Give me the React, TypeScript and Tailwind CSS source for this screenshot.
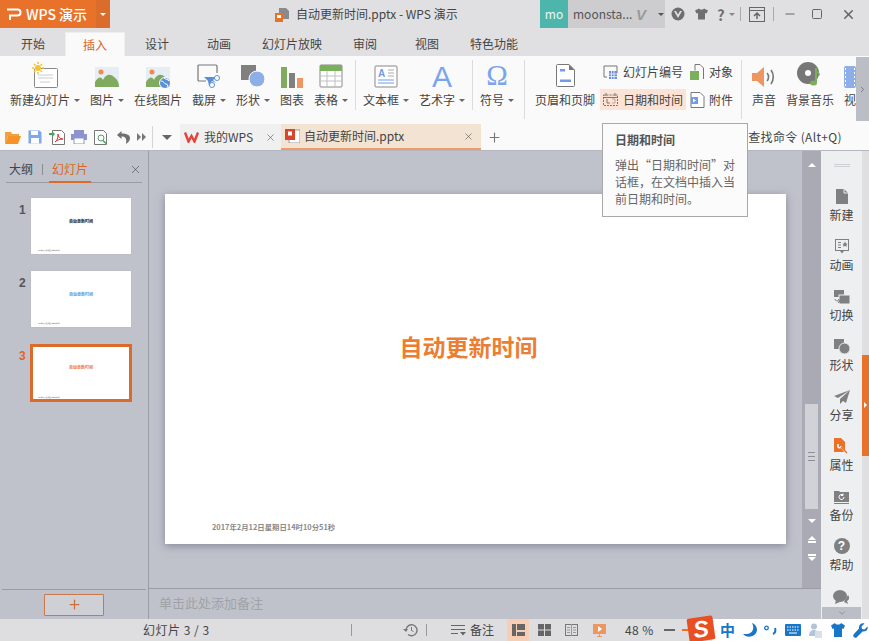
import type { ReactNode } from "react";
import { ChevronDown, ChevronRight, Minus, Plus, Square, X } from "lucide-react";

const font = "font-['Noto_Sans_CJK_SC','Liberation_Sans',sans-serif]";

const tabs = [
  { label: "开始", w: "w-[62px]" },
  { label: "插入", w: "mx-px w-[60px]", active: true },
  { label: "设计", w: "w-[62px]" },
  { label: "动画", w: "w-[62px]" },
  { label: "幻灯片放映", w: "w-[84px]" },
  { label: "审阅", w: "w-[62px]" },
  { label: "视图", w: "w-[62px]" },
  { label: "特色功能", w: "w-[72px]" },
];

function Caret() {
  return <span className="ml-[4px] inline-block h-0 w-0 border-x-[3px] border-t-[3px] border-x-transparent border-t-[#666]" />;
}

function Sep({ tall }: { tall?: boolean }) {
  return <div className={`mt-[4px] w-px shrink-0 bg-[#dcdcdc] ${tall ? "h-[59px]" : "h-[50px]"}`} />;
}

function RibbonBtn({ w, label, caret, icon }: { w: string; label: string; caret?: boolean; icon: ReactNode }) {
  return (
    <div className={`${w} flex shrink-0 flex-col items-center`}>
      <div className="flex h-[32px] items-end justify-center">{icon}</div>
      <div className="mt-[2px] flex h-[20px] items-center whitespace-nowrap text-[12px] text-[#444]">
        {label}
        {caret && <Caret />}
      </div>
    </div>
  );
}

function NewSlideIcon() {
  return (
    <svg width="26" height="26" viewBox="0 0 26 26">
      <rect x="2.5" y="6.5" width="23" height="19" rx="1" fill="#fff" stroke="#888" />
      <path d="M6 13h15M6 16h15M8 20h10" stroke="#ccc" />
      <circle cx="6" cy="6" r="3" fill="#f4c430" />
      <path d="M6 0v2M6 10v2M0 6h2M10 6h2M2 2l1.500 1.500M10 2L8.500 3.500M2 10l1.500-1.500M10 10L8.500 8.500" stroke="#f4c430" strokeWidth="1.500" />
    </svg>
  );
}

function PictureIcon({ globe }: { globe?: boolean }) {
  return (
    <svg width="26" height="22" viewBox="0 0 26 22">
      <rect x="1" y="1" width="24" height="20" fill="#e6edf3" />
      <circle cx="7" cy="6" r="2.500" fill="#f08c4a" />
      <path d="M1 21v-5c3-5 6-6 8-2 2-5 7-7 11-3 3 2 5 5 5 10z" fill="#80ab5f" />
      {globe && <circle cx="20" cy="17" r="5.500" fill="#5a8fd8" stroke="#fff" />}
      {globe && <path d="M16 15c3 0 3 3 5 3s2 2 1 3M19 12c2 2 4 1 5 3" stroke="#fff" fill="none" />}
    </svg>
  );
}

function ScreenshotIcon() {
  return (
    <svg width="26" height="24" viewBox="0 0 26 24">
      <path d="M10 17H3a1 1 0 0 1-1-1V2a1 1 0 0 1 1-1h17a1 1 0 0 1 1 1v7" fill="none" stroke="#777" strokeWidth="1.200" />
      <path d="M8 13h12l3-1-6 4 3 3-4-2-3 5-1-5z" fill="#5a8fd8" />
      <circle cx="21" cy="14" r="2.500" fill="#fff" stroke="#5a8fd8" />
      <circle cx="16" cy="21" r="2.500" fill="#fff" stroke="#5a8fd8" />
    </svg>
  );
}

function ShapeIcon() {
  return (
    <svg width="26" height="24" viewBox="0 0 26 24">
      <rect x="1" y="1" width="15" height="15" fill="#808080" />
      <circle cx="17" cy="15" r="8" fill="#8daee6" stroke="#fff" />
    </svg>
  );
}

function ChartIcon() {
  return (
    <svg width="22" height="21" viewBox="0 0 22 21">
      <rect x="0" y="0" width="6" height="21" fill="#80ab5f" />
      <rect x="8" y="6" width="6" height="15" fill="#808080" />
      <rect x="16" y="11" width="6" height="10" fill="#ef9560" />
    </svg>
  );
}

function TableIcon() {
  return (
    <svg width="24" height="24" viewBox="0 0 24 24">
      <rect x="1" y="1" width="22" height="22" rx="1" fill="#fff" stroke="#888" />
      <rect x="1" y="1" width="22" height="6" fill="#7bb05a" />
      <path d="M1 12h22M1 17h22M8 7v16M16 7v16" stroke="#c0c0c0" />
    </svg>
  );
}

function TextBoxIcon() {
  return (
    <svg width="24" height="23" viewBox="0 0 24 23">
      <rect x="1" y="1" width="22" height="21" rx="1" fill="#fff" stroke="#888" />
      <text x="4" y="12" fontSize="10" fontWeight="700" fill="#6f9be8" fontFamily="Liberation Sans">A</text>
      <path d="M4 15h16M4 18h16" stroke="#6f9be8" />
      <path d="M14 5h6M14 8h6M14 11h6" stroke="#aaa" />
    </svg>
  );
}

function PageIcon() {
  return (
    <svg width="21" height="25" viewBox="0 0 21 25">
      <path d="M1.500 2.500a1 1 0 0 1 1-1H14l5.500 5.500v15.500a1 1 0 0 1-1 1h-16a1 1 0 0 1-1-1z" fill="#fff" stroke="#777" />
      <path d="M14 1.500V7h5.500z" fill="#777" />
      <path d="M5 6h5v2.500H5zM5 16.500h11V19H5z" fill="#6f9be8" />
    </svg>
  );
}

function SpeakerIcon() {
  return (
    <svg width="26" height="22" viewBox="0 0 26 22">
      <path d="M1 7h5l7-6v20l-7-6H1z" fill="#ef9560" />
      <path d="M16 7c2 2 2 6 0 8M20 4c3 4 3 10 0 14" fill="none" stroke="#777" strokeWidth="1.600" />
    </svg>
  );
}

function MusicIcon() {
  return (
    <svg width="26" height="26" viewBox="0 0 26 26">
      <circle cx="11" cy="11" r="11" fill="#777" />
      <circle cx="11" cy="11" r="3" fill="#fff" />
      <path d="M19 6v14" stroke="#7bb05a" strokeWidth="2" />
      <ellipse cx="16.500" cy="21" rx="3.500" ry="2.500" fill="#7bb05a" />
      <path d="M19 6c0 4 5 4 4 8-1-2-3-3-4-3z" fill="#7bb05a" />
    </svg>
  );
}

function Arrow({ up, color = "#fff" }: { up?: boolean; color?: string }) {
  return up ? (
    <span className="block h-0 w-0 border-x-[4px] border-b-[4px] border-x-transparent" style={{ borderBottomColor: color }} />
  ) : (
    <span className="block h-0 w-0 border-x-[4px] border-t-[4px] border-x-transparent" style={{ borderTopColor: color }} />
  );
}

function TitleBar() {
  return (
    <div className="flex h-[28px] shrink-0 bg-[#e0e0e3]">
      <div className="flex w-[96px] items-center whitespace-nowrap bg-[#e8722a] pl-[6px] text-[14px] font-medium text-white">
        <svg width="16" height="13" viewBox="0 0 16 13" className="mr-[4px] shrink-0">
          <path d="M1 1.500h10.500a2.500 2.500 0 0 1 0 6H4V12" fill="none" stroke="#fff" strokeWidth="2" />
        </svg>
        WPS 演示
      </div>
      <div className="flex w-[14px] items-center justify-center bg-[#da6c2c]">
        <span className="h-0 w-0 border-x-[3px] border-t-[3px] border-x-transparent border-t-white" />
      </div>
      <div className="flex w-[430px] items-center pl-[165px] text-[12px] text-[#444]">
        <svg width="15" height="15" viewBox="0 0 15 15" className="mr-[6px] shrink-0">
          <path d="M4 1h7l3 3v8H4z" fill="#8a8a8a" />
          <rect x="0" y="6" width="8" height="9" fill="#e8722a" />
          <rect x="2" y="8" width="4" height="3" fill="#fff" />
        </svg>
        <span className="whitespace-nowrap">自动更新时间.pptx - WPS 演示</span>
      </div>
      <div className="flex w-[28px] items-center justify-center bg-[#4db6ac] text-[12px] text-[#e8f6f4]">mo</div>
      <div className="flex w-[97px] items-center bg-[#cdcdcf] pl-[5px] text-[12px] text-[#555]">
        <span className="w-[63px] whitespace-nowrap">moonsta...</span>
        <span className="w-[18px] font-['Liberation_Sans',sans-serif] text-[15px] font-bold italic leading-none text-[#999]">V</span>
        <span className="ml-[4px] h-0 w-0 border-x-[3.500px] border-t-[3.500px] border-x-transparent border-t-[#555]" />
      </div>
      <div className="flex items-center pl-[5px] text-[#6e6e6e]">
        <svg width="14" height="14" viewBox="0 0 14 14" className="ml-[1px] mr-[10px]">
          <circle cx="7" cy="7" r="6.500" fill="#6e6e6e" />
          <path d="M3 4h8L7 11z" fill="#e0e0e3" />
          <path d="M7 7.500L5 4h4z" fill="#6e6e6e" />
        </svg>
        <svg width="13" height="12" viewBox="0 0 13 12" className="mr-[9px]">
          <path d="M4 0.500L0 2.500l1.500 3L3 5v6.500h7V5l1.500.500L13 2.500 9 .500C8.500 2 4.500 2 4 .500z" fill="#6e6e6e" />
        </svg>
        <span className="w-[9px] text-[15px] font-bold leading-none">?</span>
        <span className="ml-[3px] mr-[5px] h-0 w-0 border-x-[3px] border-t-[3px] border-x-transparent border-t-[#888]" />
        <div className="h-[14px] w-px bg-[#aaa]" />
        <svg width="16" height="15" viewBox="0 0 16 15" className="mx-[8px]">
          <rect x=".5" y=".5" width="15" height="14" fill="none" stroke="#666" />
          <path d="M.5 3.500h15" stroke="#666" />
          <path d="M8 12V6M5 9l3-3 3 3" fill="none" stroke="#666" strokeWidth="1.500" />
        </svg>
        <div className="h-[14px] w-px bg-[#aaa]" />
        <Minus size={14} strokeWidth={2} className="ml-[9px] text-[#666]" />
        <Square size={12} strokeWidth={2} className="ml-[14px] text-[#666]" />
        <X size={15} strokeWidth={2.500} className="ml-[18px] text-[#666]" />
      </div>
    </div>
  );
}

function TabBar() {
  return (
    <div className="flex h-[28px] shrink-0 items-end bg-[#e0e0e3] pl-[2px] text-[12px] text-[#444]">
      {tabs.map((t) => (
        <div
          key={t.label}
          className={`${t.w} flex h-[25px] items-center justify-center ${
            t.active ? "-mb-px border-x border-t border-[#eeeeee] bg-[#fafafa] text-[#d9651f]" : ""
          }`}
        >
          {t.label}
        </div>
      ))}
    </div>
  );
}

function Ribbon() {
  return (
    <div className="flex h-[65px] shrink-0 bg-[#fafafa]">
      <div className="flex flex-1 pl-[6px]">
        <RibbonBtn w="w-[78px]" label="新建幻灯片" caret icon={<NewSlideIcon />} />
        <RibbonBtn w="w-[46px]" label="图片" caret icon={<PictureIcon />} />
        <RibbonBtn w="w-[56px]" label="在线图片" icon={<PictureIcon globe />} />
        <RibbonBtn w="w-[46px]" label="截屏" caret icon={<ScreenshotIcon />} />
        <RibbonBtn w="w-[42px]" label="形状" caret icon={<ShapeIcon />} />
        <RibbonBtn w="w-[36px]" label="图表" icon={<ChartIcon />} />
        <RibbonBtn w="w-[42px]" label="表格" caret icon={<TableIcon />} />
        <div className="w-[3px]" />
        <Sep />
        <RibbonBtn w="w-[60px]" label="文本框" caret icon={<TextBoxIcon />} />
        <RibbonBtn w="w-[52px]" label="艺术字" caret
          icon={<span className="mb-[-4px] font-['Liberation_Sans',sans-serif] text-[30px] leading-none text-[#7aa5ee]">A</span>} />
        <div className="w-[4px]" />
        <Sep />
        <RibbonBtn w="w-[48px]" label="符号" caret
          icon={<span className="mb-[-2px] font-['Liberation_Serif',serif] text-[29px] leading-none text-[#7aa5ee]">Ω</span>} />
        <div className="w-[3px]" />
        <Sep tall />
        <div className="w-[5px]" />
        <RibbonBtn w="w-[70px]" label="页眉和页脚" icon={<PageIcon />} />
        <div className="flex w-[141px] shrink-0 flex-col pt-[4px] text-[12px] text-[#444]">
          <div className="flex h-[24px] items-center pl-[3px]">
            <svg width="15" height="14" viewBox="0 0 15 14" className="mr-[5px]">
              <path d="M4 12H1V1h13v7" fill="none" stroke="#777" />
              <rect x="6" y="6" width="8" height="8" fill="#6f8fdc" />
              <path d="M8.500 6v8M11 6v8M6 9h8M6 11.500h8" stroke="#fff" strokeWidth=".7" />
            </svg>
            <span className="w-[67px] whitespace-nowrap">幻灯片编号</span>
            <svg width="14" height="16" viewBox="0 0 14 16" className="mr-[5px]">
              <path d="M5 .5h5l3.500 3.500v11" fill="none" stroke="#777" />
              <path d="M5 .5v6" stroke="#777" />
              <rect x="0" y="7" width="9" height="9" fill="#7bb05a" />
            </svg>
            <span>对象</span>
          </div>
          <div className="mt-[5px] flex h-[21px] items-center">
            <div className="flex h-[21px] w-[86px] items-center bg-[#fde3d6] pl-[3px]">
              <svg width="15" height="13" viewBox="0 0 15 13" className="mr-[5px]">
                <rect x=".5" y="2" width="14" height="10.500" fill="none" stroke="#777" strokeDasharray="2 1" />
                <path d="M.5 4.500h14M3 0v3M12 0v3" stroke="#777" />
                <path d="M4 6v4h3" fill="none" stroke="#777" />
                <path d="M9 6h3v4H9" fill="none" stroke="#c9a38d" />
              </svg>
              <span className="whitespace-nowrap">日期和时间</span>
            </div>
            <svg width="15" height="16" viewBox="0 0 15 16" className="ml-[4px] mr-[4px]">
              <path d="M1 .5h9l4 4V15.500H1z" fill="#fff" stroke="#777" />
              <rect x="1" y="5" width="7" height="7" fill="#6f9be8" />
              <path d="M3 6.500l3 2-3 2z" fill="#fff" />
            </svg>
            <span>附件</span>
          </div>
        </div>
        <Sep tall />
        <RibbonBtn w="w-[44px]" label="声音" icon={<SpeakerIcon />} />
        <RibbonBtn w="w-[48px]" label="背景音乐" icon={<MusicIcon />} />
        <div className="w-[10px]" />
        <div className="flex w-[12px] shrink-0 flex-col">
          <div className="flex h-[32px] items-end">
            <svg width="12" height="22" viewBox="0 0 12 22">
              <rect width="12" height="22" rx="2" fill="#8daee6" />
              <path d="M1.500 2v18M10.500 2v18" stroke="#fff" strokeDasharray="2 2" />
            </svg>
          </div>
          <div className="mt-[2px] flex h-[20px] items-center text-[12px] text-[#444]">视</div>
        </div>
      </div>
      <div className="mt-px flex h-[64px] w-[13px] shrink-0 items-center justify-center bg-[#bcbec6]">
        <ChevronRight size={9} className="text-[#666]" />
      </div>
    </div>
  );
}

function QuickBar() {
  return (
    <div className="flex h-[29px] shrink-0 items-end bg-[#fafafa] text-[12px] text-[#444]">
      <div className="flex h-[26px] w-[180px] shrink-0 items-center pl-[5px]">
        <svg width="16" height="13" viewBox="0 0 16 13" className="mr-[7px]">
          <path d="M0 1h6l1 2h7v2H3l-3 8z" fill="#f2a13c" />
          <path d="M3 5h13l-3 8H0z" fill="#f7932a" />
        </svg>
        <svg width="14" height="14" viewBox="0 0 14 14" className="mr-[7px]">
          <path d="M.5 .5h11l2 2v11H.5z" fill="#7ea8ea" />
          <rect x="3" y="1" width="7" height="4" fill="#fff" />
          <rect x="3" y="8" width="8" height="5.500" fill="#fff" />
        </svg>
        <svg width="16" height="15" viewBox="0 0 16 15" className="mr-[6px]">
          <path d="M3.500 .5h9l3 3v11h-12z" fill="#fff" stroke="#777" />
          <path d="M0 3h3V1l3 3-3 3V5H0z" fill="#4aa25e" />
          <path d="M6 12c3-2 3-6 3-8 0 3 2 5 5 5-3 0-6 1-8 3z" fill="none" stroke="#d9342b" />
        </svg>
        <svg width="16" height="14" viewBox="0 0 16 14" className="mr-[7px]">
          <rect x="3" y="0" width="10" height="4" fill="#8d93cf" />
          <rect x="0" y="4" width="16" height="6" fill="#8d93cf" />
          <rect x="3" y="8" width="10" height="6" fill="#fff" stroke="#8d93cf" />
        </svg>
        <svg width="14" height="15" viewBox="0 0 14 15" className="mr-[9px]">
          <path d="M.5 .5h9l3 3v11H.5z" fill="#fff" stroke="#777" />
          <circle cx="7" cy="8" r="3" fill="#fff" stroke="#4aa25e" />
          <path d="M9 10.500l3 3" stroke="#4aa25e" strokeWidth="1.500" />
        </svg>
        <svg width="13" height="13" viewBox="0 0 13 13" className="mr-[7px]">
          <path d="M4.500 0L0 4l4.500 4V5.500C8 5.500 10 7 9 13c3-2 4-4 4-6 0-3-3-4.500-8.500-4.500z" fill="#707070" />
        </svg>
        <svg width="9" height="8" viewBox="0 0 9 8" className="mr-[6px]">
          <path d="M0 0l4 4-4 4zM5 0l4 4-4 4z" fill="#777" />
        </svg>
        <div className="mr-[9px] h-[22px] w-px bg-[#d4d4d4]" />
        <span className="h-0 w-0 border-x-[5px] border-t-[5px] border-x-transparent border-t-[#666]" />
      </div>
      <div className="flex h-[26px] w-[101px] shrink-0 items-center bg-[#f0f0f0] pl-[4px]">
        <svg width="15" height="12" viewBox="0 0 15 12" className="mr-[5px]">
          <path d="M1 1.500l3.500 9L7.500 5l3 5.500L14 1.500" fill="none" stroke="#e5413b" strokeWidth="2.400" />
        </svg>
        <span className="w-[61px] whitespace-nowrap">我的WPS</span>
        <X size={11} strokeWidth={1.200} className="text-[#444]" />
      </div>
      <div className="flex h-[26px] w-[200px] shrink-0 items-center border-b-2 border-[#ef9a68] bg-[#f3e3d3] pl-[4px]">
        <svg width="15" height="14" viewBox="0 0 15 14" className="mr-[4px]">
          <rect x="4" y="1" width="11" height="13" fill="#fff" stroke="#999" />
          <rect x="0" y="0" width="10" height="11" fill="#d9452a" />
          <rect x="3" y="2.500" width="4" height="4" fill="#fff" />
        </svg>
        <span className="w-[159px] whitespace-nowrap">自动更新时间.pptx</span>
        <X size={11} strokeWidth={1.200} className="text-[#444]" />
      </div>
      <div className="flex h-[26px] w-[26px] shrink-0 items-center justify-center">
        <Plus size={15} strokeWidth={1.800} className="text-[#777]" />
      </div>
      <div className="flex h-[26px] flex-1 items-center justify-end pr-[27px]">
        <span className="whitespace-nowrap tracking-[0.35px]">查找命令 (Alt+Q)</span>
      </div>
    </div>
  );
}

function Thumb({ n, color, active }: { n: number; color: string; active?: boolean }) {
  return (
    <div className="flex h-[73px] items-start">
      <div className={`pl-[19px] pt-[6px] font-['Liberation_Sans',sans-serif] text-[12px] font-bold leading-none ${active ? "w-[30px] text-[#e0651f]" : "w-[31px] text-[#555]"}`}>
        {n}
      </div>
      <div className={`flex flex-col items-center bg-white ${active ? "h-[58px] w-[102px] border-[3px] border-[#dc6a2a] pt-[18px]" : "h-[56px] w-[100px] pt-[21px] shadow-[0_0_1px_#aaa]"}`}>
        <div className={`whitespace-nowrap text-[4px] font-bold leading-[4px] ${color}`}>自动更新时间</div>
        <div className={`mt-auto self-start whitespace-nowrap text-[1.300px] font-bold leading-[2px] text-[#777] ${active ? "mb-px ml-[5px]" : "mb-[3px] ml-[7px]"}`}>
          2017年2月12日星期日14时10分51秒
        </div>
      </div>
    </div>
  );
}

function LeftPane() {
  return (
    <div className="flex w-[149px] shrink-0 flex-col border-r border-[#9a9ca3]">
      <div className="mx-[6px] flex h-[32px] shrink-0 items-end border-b border-[#9a9ca3] pb-[4px] text-[12px] text-[#444]">
        <span className="ml-[3px]">大纲</span>
        <span className="mx-[9px] mb-[3px] h-[11px] w-px bg-[#8b8d95]" />
        <span className="relative text-[#dd651f]">
          幻灯片
          <span className="absolute -left-[3px] -right-[3px] -bottom-[5px] h-[2px] bg-[#dc6a2a]" />
        </span>
        <X size={13} strokeWidth={1} className="mb-[2px] ml-auto text-[#333]" />
      </div>
      <div className="flex-1 pt-[15px]">
        <Thumb n={1} color="text-[#111]" />
        <Thumb n={2} color="text-[#5b9bd5]" />
        <Thumb n={3} color="text-[#ed7d31]" active />
      </div>
      <div className="mx-[2px] flex h-[30px] shrink-0 items-center justify-center border-t border-[#9a9ca3]">
        <div className="flex h-[22px] w-[60px] items-center justify-center rounded-[1px] border border-[#c9784a] bg-[#cfd0d6]">
          <Plus size={15} strokeWidth={2} className="text-[#c9703c]" />
        </div>
      </div>
    </div>
  );
}

function SideItem({ label, icon }: { label: string; icon: ReactNode }) {
  return (
    <div className="flex h-[50px] flex-col items-center text-[12px] text-[#444]">
      <div className="flex h-[27px] items-end justify-center">{icon}</div>
      <div className="mt-[2px] leading-[18px]">{label}</div>
    </div>
  );
}

function RightRail() {
  return (
    <div className="flex w-[48px] shrink-0 self-stretch">
      <div className="relative flex w-[41px] flex-col bg-[#eeeff1]">
        <div className="mx-auto mt-[13px] h-[3px] w-[16px] border-y border-[#cfd0d5]" />
        <div className="mt-[10px]">
          <SideItem label="新建" icon={
            <svg width="12" height="15" viewBox="0 0 12 15"><path d="M0 0h8l4 4v11H0z" fill="#808080" /><path d="M8 0v4h4" fill="none" stroke="#eee" /></svg>
          } />
          <SideItem label="动画" icon={
            <svg width="14" height="15" viewBox="0 0 14 15"><rect x=".5" y=".5" width="13" height="11" fill="none" stroke="#808080" /><path d="M3 3.500h3M3 6h3M3 8.500h3" stroke="#808080" /><path d="M10 2.500l1 2 1.500.3-1 1.200.2 1.800-1.700-.8-1.700.8.200-1.800-1-1.200 1.500-.3z" fill="#808080" /><path d="M5 12h4l-2 2.500z" fill="#808080" /></svg>
          } />
          <SideItem label="切换" icon={
            <svg width="16" height="14" viewBox="0 0 16 14"><rect x="0" y="0" width="10" height="7" fill="#808080" /><rect x="5" y="5" width="11" height="9" fill="#808080" stroke="#eeeff1" /><path d="M1 9c0 2 2 2 5 2M4 9l2 2-2 2" fill="none" stroke="#808080" /></svg>
          } />
          <SideItem label="形状" icon={
            <svg width="16" height="15" viewBox="0 0 16 15"><rect x="0" y="0" width="10" height="10" fill="#808080" /><circle cx="10.500" cy="9.500" r="5.500" fill="#808080" stroke="#eeeff1" /></svg>
          } />
          <SideItem label="分享" icon={
            <svg width="16" height="14" viewBox="0 0 16 14"><path d="M16 0L0 6l4 2L16 0 6 9v5l3-3 3 2z" fill="#808080" /></svg>
          } />
          <SideItem label="属性" icon={
            <svg width="16" height="16" viewBox="0 0 16 16"><path d="M0 0h7l4 4v10H0z" fill="#e8722a" /><path d="M4 6v3a2 2 0 0 0 3 0l5 6" fill="none" stroke="#fff" strokeWidth="1.500" /><path d="M7 9l6 6" stroke="#e8722a" strokeWidth="1.500" /></svg>
          } />
          <SideItem label="备份" icon={
            <svg width="15" height="14" viewBox="0 0 15 14"><path d="M0 1h5l1 1h9v10H0z" fill="#808080" /><path d="M0 13.500h15" stroke="#808080" /><path d="M10 7a2.500 2.500 0 1 1-1-2M9 3.500V5.500H7" fill="none" stroke="#fff" /></svg>
          } />
          <SideItem label="帮助" icon={
            <span className="flex h-[16px] w-[16px] items-center justify-center rounded-full bg-[#808080] font-['Liberation_Sans',sans-serif] text-[12px] font-bold leading-none text-white">?</span>
          } />
          <div className="flex h-[28px] items-end justify-center">
            <svg width="17" height="15" viewBox="0 0 17 15"><ellipse cx="7" cy="6" rx="7" ry="6" fill="#808080" /><path d="M3 10l-1 4 5-2z" fill="#808080" /><path d="M15 5c2 3 1 5-1 6l1 3-4-2" fill="#808080" /></svg>
          </div>
        </div>
        <div className="absolute inset-x-px bottom-0 flex h-[12px] items-center justify-center bg-[#bcbec6]">
          <ChevronDown size={10} strokeWidth={1} className="text-[#555]" />
        </div>
      </div>
      <div className="flex w-[7px] flex-col bg-[#dfdfe2]">
        <div className="mt-[204px] flex h-[101px] items-start bg-[#e8722a] pt-[47px]">
          <span className="ml-[2px] h-0 w-0 border-y-[3px] border-l-[3px] border-y-transparent border-l-white" />
        </div>
      </div>
    </div>
  );
}

function ScrollBar() {
  return (
    <div className="flex w-[19px] shrink-0 flex-col items-center bg-[#a9aab3]">
      <div className="mt-[12px]"><Arrow up /></div>
      <div className="mt-[237px] flex h-[105px] w-[13px] flex-col items-center justify-center gap-[3px] bg-[#d0d2d7]">
        <div className="h-px w-[7px] bg-[#8d8e96]" />
        <div className="h-px w-[7px] bg-[#8d8e96]" />
        <div className="h-px w-[7px] bg-[#8d8e96]" />
      </div>
      <div className="mt-[10px]"><Arrow /></div>
      <div className="mt-[13px] flex flex-col gap-[1px]"><Arrow up /><div className="h-[2px] w-[8px] bg-white" /></div>
      <div className="mt-[11px] flex flex-col gap-[1px]"><div className="h-[2px] w-[8px] bg-white" /><Arrow /></div>
    </div>
  );
}

function Main() {
  return (
    <div className="flex min-h-0 flex-1 border-t border-[#b5b7bf] bg-[#bfc2cb]">
      <LeftPane />
      <div className="flex min-w-0 flex-1 flex-col">
        <div className="flex min-h-0 flex-1 border-b border-[#9a9ca3]">
          <div className="flex-1 pl-[16px] pt-[43px]">
            <div className="flex h-[350px] w-[621px] flex-col bg-white shadow-[0_2px_8px_rgba(90,90,110,0.55)]">
              <div className="mt-[136px] pr-[14px] text-center font-['Noto_Sans_CJK_SC',sans-serif] text-[23px] font-bold leading-[32px] text-[#ed7d31]">
                自动更新时间
              </div>
              <div className="mt-auto mb-[12px] ml-[47px] whitespace-nowrap text-[7.400px] font-bold leading-[10px] text-[#8a8a8a]">
                2017年2月12日星期日14时10分51秒
              </div>
            </div>
          </div>
          <ScrollBar />
        </div>
        <div className="flex h-[30px] shrink-0 items-center pb-[2px] pl-[10px] text-[13px] text-[#a0a2a8]">单击此处添加备注</div>
      </div>
      <RightRail />
    </div>
  );
}

function StatusBar() {
  return (
    <div className="flex h-[22px] shrink-0 items-center bg-[#dedee0] text-[12px] text-[#444]">
      <span className="ml-[143px] w-[208px] whitespace-nowrap tracking-[0.5px]">幻灯片 3 / 3</span>
      <div className="h-[12px] w-px bg-[#999]" />
      <svg width="15" height="14" viewBox="0 0 15 14" className="ml-[51px]">
        <path d="M3 7a5.500 5.500 0 1 1 2 4.500" fill="none" stroke="#777" strokeWidth="1.400" />
        <path d="M0 6h5L3 9z" fill="#777" />
        <path d="M8.500 4v3.500l2 1" fill="none" stroke="#777" />
      </svg>
      <div className="ml-[8px] h-[12px] w-px bg-[#999]" />
      <svg width="15" height="11" viewBox="0 0 15 11" className="ml-[24px]">
        <path d="M0 .5h14M0 4.500h14M0 8.500h7" stroke="#666" />
        <path d="M9 7h6l-3 3.500z" fill="#666" />
      </svg>
      <span className="ml-[4px] w-[37px] whitespace-nowrap">备注</span>
      <div className="flex h-[22px] w-[22px] items-center justify-center bg-[#f8cdb6]">
        <svg width="13" height="12" viewBox="0 0 13 12"><path d="M0 0h4v12H0zM5 0h8v6H5zM5 8h8v4H5z" fill="#666" /></svg>
      </div>
      <svg width="13" height="12" viewBox="0 0 13 12" className="ml-[9px]"><path d="M0 0h6v5.500H0zM7 0h6v5.500H7zM0 6.500h6V12H0zM7 6.500h6V12H7z" fill="#666" /></svg>
      <svg width="13" height="12" viewBox="0 0 13 12" className="ml-[14px]"><rect x=".5" y=".5" width="12" height="11" fill="none" stroke="#777" /><path d="M6.500 0v12M2 3.500h3M2 6h3M2 8.500h3M8 3.500h3M8 6h3M8 8.500h3" stroke="#999" /></svg>
      <svg width="13" height="13" viewBox="0 0 13 13" className="ml-[15px]"><rect x="0" y="0" width="13" height="10" fill="#ef9560" /><path d="M5 2l4 3-4 3z" fill="#fff" /><path d="M4 12.500h5M6.500 10v2" stroke="#ef9560" /></svg>
      <span className="ml-[19px] w-[39px] whitespace-nowrap tracking-[0.4px]">48 %</span>
      <div className="h-[2px] w-[11px] bg-[#666]" />
      <div className="ml-[7px] h-[2px] w-[8px] bg-[#e8722a]" />
    </div>
  );
}

function ImeBar() {
  // sogou toolbar floating over the status bar
  return (
    <div className="absolute bottom-0 right-0 flex h-[22px] w-[181px] items-center">
      <div className="relative z-10 flex h-[24px] w-[26px] -translate-y-[1px] -rotate-[8deg] items-center justify-center rounded-[2px] bg-[#ea4f22] font-['Liberation_Sans',sans-serif] text-[23px] font-black italic leading-none text-white">
        S
      </div>
      <div className="-ml-[2px] flex h-[22px] flex-1 items-center bg-white pl-[8px]">
        <span className="mt-[-2px] text-[15px] font-bold leading-none text-[#1976c6]">中</span>
        <svg width="14" height="14" viewBox="0 0 14 14" className="ml-[8px]"><path d="M9 0c3 5 1 12-9 11 3 4 13 4 14-4 0-3-2-6-5-7z" fill="#1976c6" /></svg>
        <svg width="13" height="10" viewBox="0 0 13 10" className="ml-[7px]"><circle cx="2.500" cy="3" r="1.800" fill="none" stroke="#1976c6" strokeWidth="1.300" /><path d="M11 3c1 3 0 5-2 6" fill="none" stroke="#1976c6" strokeWidth="2" /></svg>
        <svg width="16" height="12" viewBox="0 0 16 12" className="ml-[8px]"><rect width="16" height="12" rx="1" fill="#1976c6" /><path d="M2 3h12M2 6h12" stroke="#fff" strokeDasharray="1.500 1" /><path d="M4 9h8" stroke="#fff" /></svg>
        <svg width="13" height="15" viewBox="0 0 13 15" className="ml-[8px]"><circle cx="5" cy="3.500" r="3" fill="#b4c4d8" /><path d="M0 13c0-4 2-6 5-6s5 2 5 6z" fill="#b4c4d8" /><rect x="6" y="8" width="7" height="7" fill="#d8dfe8" /></svg>
        <svg width="14" height="14" viewBox="0 0 14 14" className="ml-[9px]"><path d="M4 0L0 2.500l1.500 3.500L3 5.500V14h8V5.500l1.500.500L14 2.500 10 0C9.500 2 4.500 2 4 0z" fill="#1976c6" /></svg>
        <svg width="15" height="15" viewBox="0 0 15 15" className="ml-[8px]"><path d="M14.500 3.500l-3 3-2.500-.500L8.500 3.500l3-3c-3-1-6 1-5.500 5L0.500 11.500c-1 2 1.500 4 3 3l6-6c3.500.500 6-2 5-5z" fill="#1976c6" /></svg>
      </div>
    </div>
  );
}

function Tooltip() {
  return (
    <div className="absolute left-[602px] top-[123px] h-[94px] w-[146px] border border-[#a8a8a8] bg-[#fbfbfb] pl-[12px] pt-[7px] text-[12px] text-[#666]">
      <div className="font-bold leading-[18px] text-[#555]">日期和时间</div>
      <div className="mt-[7px] w-[122px] leading-[17px]">弹出“日期和时间”对话框，在文档中插入当前日期和时间。</div>
    </div>
  );
}

export default function App() {
  return (
    <div className={`${font} relative flex h-[641px] w-[869px] flex-col overflow-hidden`}>
      <TitleBar />
      <TabBar />
      <Ribbon />
      <QuickBar />
      <Main />
      <StatusBar />
      <ImeBar />
      <Tooltip />
    </div>
  );
}
